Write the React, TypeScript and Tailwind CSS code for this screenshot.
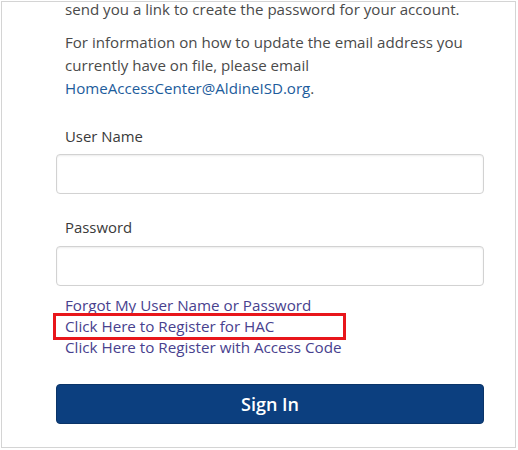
export default function App() {
  return (
    <main className="w-[518px] h-[450px] bg-white overflow-hidden" style={{ fontFamily: '"Open Sans", "Liberation Sans", sans-serif' }}>
      {/* Frame */}
      <div className="ml-[1px] mt-[1px] w-[515px] h-[447px] border border-[#d4d4d4] overflow-hidden">
        <div className="pl-[54px] pr-[34px]">
          <div className="pl-[9px] text-[15.1px] leading-[23px] text-[#4a4a4a] -mt-[4px]">
            <p>send you a link to create the password for your account.</p>
            <p className="mt-[10px]">
              For information on how to update the email address you currently have on file, please email{' '}
              <a href="#" className="text-[#1d5c9c]">HomeAccessCenter@AldineISD.org</a>.
            </p>
          </div>

          {/* User name */}
          <label className="block mt-[25px] pl-[9px] text-[14.9px] leading-[23px] text-[#3a3a3a]">User Name</label>
          <input
            type="text"
            className="block mt-[6px] w-[428px] h-[40px] rounded-[4px] border border-[#d2d2d2] shadow-[inset_0_1px_2px_rgba(0,0,0,0.08)] bg-white"
          />

          {/* Password */}
          <label className="block mt-[22px] pl-[9px] text-[14.9px] leading-[23px] text-[#3a3a3a]">Password</label>
          <input
            type="password"
            className="block mt-[7px] w-[428px] h-[40px] rounded-[4px] border border-[#d2d2d2] shadow-[inset_0_1px_2px_rgba(0,0,0,0.08)] bg-white"
          />

          {/* Links */}
          <div className="mt-[9px] flex flex-col text-[15.2px] leading-[21px] text-[#48418e]">
            <a href="#" className="pl-[9px]">Forgot My User Name or Password</a>
            <a href="#" className="-ml-[3px] pl-[9px] w-[293px] border-[3px] border-[#e8161b] -my-[3px] relative">
              Click Here to Register for HAC
            </a>
            <a href="#" className="pl-[9px]">Click Here to Register with Access Code</a>
          </div>

          <button className="mt-[26px] w-[428px] h-[40px] rounded-[4px] bg-[#0c3f7f] border border-[#0a3468] text-white text-[18px] font-semibold">
            Sign In
          </button>
        </div>
      </div>
    </main>
  )
}
